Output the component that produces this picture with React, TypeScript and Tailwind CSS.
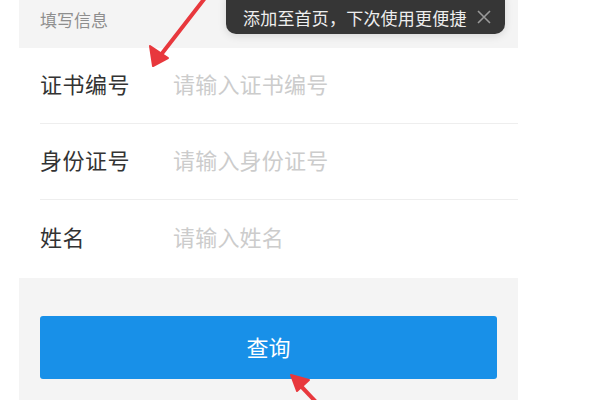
import React from "react";

const font = { fontFamily: '"Noto Sans CJK SC", "Noto Sans", sans-serif' };

function Row({ label, placeholder, last }: { label: string; placeholder: string; last?: boolean }) {
  return (
    <div className={`ml-[21px] mr-0 h-[76px] pb-[5px] flex items-center ${last ? "" : "border-b border-[#eeeeee]"}`}>
      <div className="w-[133px] text-[22px] text-[#333333] leading-none tracking-[0.5px]">{label}</div>
      <div className="text-[22px] text-[#cccccc] leading-none tracking-[0.2px]">{placeholder}</div>
    </div>
  );
}

export default function App() {
  return (
    <div className="relative w-[600px] h-[400px] bg-white overflow-hidden" style={font}>
      <div className="ml-[19px] w-[499px] h-[400px] bg-[#f4f4f4] flex flex-col">
        <div className="h-[48px] flex items-center pl-[21px] pb-[8px] text-[17px] text-[#8e8e8e]">填写信息</div>
        <div className="bg-white h-[230px] flex flex-col">
          <Row label="证书编号" placeholder="请输入证书编号" />
          <Row label="身份证号" placeholder="请输入身份证号" />
          <Row label="姓名" placeholder="请输入姓名" last />
        </div>
        <div className="px-[21px] pt-[38px]">
          <div className="h-[63px] pb-[3px] rounded-[3px] bg-[#1890e8] flex items-center justify-center text-white text-[22px]">查询</div>
        </div>
      </div>

      {/* tooltip */}
      <div className="absolute left-[226px] top-[-10px] w-[279px] h-[44px] rounded-[10px] bg-[#363636] shadow-[0_2px_8px_rgba(0,0,0,0.12)] flex items-center pt-[10px] pl-[17px]">
        <span className="text-[17px] text-[#eeeeee] leading-none tracking-[0.2px]">添加至首页，下次使用更便捷</span>
        <svg className="ml-[10px]" width="14" height="14" viewBox="0 0 14 14">
          <path d="M1 1 L13 13 M13 1 L1 13" stroke="#9a9a9a" strokeWidth="1.6" fill="none" />
        </svg>
      </div>

      {/* arrows */}
      <svg className="absolute left-0 top-0 pointer-events-none" width="600" height="400" viewBox="0 0 600 400">
        <path d="M205 -2 L160 56" stroke="#e8383d" strokeWidth="4" strokeLinecap="round" fill="none" />
        <path d="M153 66 L150 46 L168 58 Z" fill="#e8383d" stroke="#e8383d" strokeWidth="2" strokeLinejoin="round" />
        <path d="M316 402 L298 383" stroke="#e8383d" strokeWidth="4" strokeLinecap="round" fill="none" />
        <path d="M291 375 L309 380 L297 391 Z" fill="#e8383d" stroke="#e8383d" strokeWidth="2" strokeLinejoin="round" />
      </svg>
    </div>
  );
}
